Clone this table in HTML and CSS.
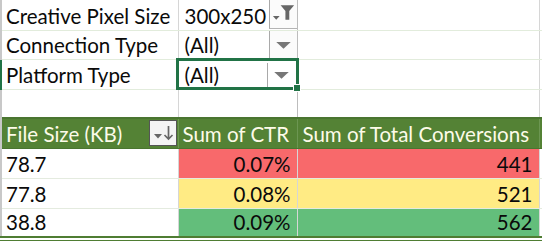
FILE: index.html
```html
<!DOCTYPE html>
<html lang="en">
<head>
    <meta charset="UTF-8">
    <title>Pivot Report</title>
    <link rel="stylesheet" href="styles.css">
</head>
<body>
    <table class="sheet">
        <colgroup>
            <col class="c1"><col class="c2"><col class="c3"><col class="c4">
        </colgroup>
        <!-- Report filters -->
        <tr class="filter r1">
            <td class="label">Creative Pixel Size</td>
            <td class="value">300x250
                <span class="drop">
                    <svg width="28" height="28" viewBox="0 0 28 28">
                        <path d="M3 16h7l-3.5 4z" fill="#666"/>
                        <path d="M11 5h14l-5 6v9h-4v-9z" fill="#666"/>
                    </svg>
                </span>
            </td>
            <td></td><td></td>
        </tr>
        <tr class="filter r2">
            <td class="label">Connection Type</td>
            <td class="value">(All)
                <span class="drop">
                    <svg width="28" height="28" viewBox="0 0 28 28"><path d="M6.5 11h15l-7.5 7z" fill="#777"/></svg>
                </span>
            </td>
            <td></td><td></td>
        </tr>
        <tr class="filter r3 active-row">
            <td class="label">Platform Type</td>
            <td class="value selected">(All)
                <span class="drop">
                    <svg width="28" height="26" viewBox="0 0 28 26"><path d="M6.5 10h15l-7.5 7z" fill="#777"/></svg>
                </span>
                <span class="sel-box"></span>
                <span class="fill-handle"></span>
            </td>
            <td></td><td></td>
        </tr>
        <tr class="filter r4">
            <td class="label"></td><td class="value"></td><td></td><td></td>
        </tr>

        <!-- Pivot header -->
        <tr class="head">
            <td class="label">File Size (KB)
                <span class="sort">
                    <svg width="26" height="24" viewBox="0 0 26 24">
                        <path d="M4 13h8l-4 4.5z" fill="#666"/>
                        <path d="M18.5 5v13M14.5 14l4 4 4-4" stroke="#666" stroke-width="1.7" fill="none"/>
                    </svg>
                </span>
            </td>
            <td class="num">Sum of CTR</td>
            <td class="conv">Sum of Total Conversions</td>
            <td class="spare"></td>
        </tr>

        <!-- Pivot rows -->
        <tr class="data">
            <td class="label">78.7</td>
            <td class="num red">0.07%</td>
            <td class="num red">441</td>
            <td></td>
        </tr>
        <tr class="data">
            <td class="label">77.8</td>
            <td class="num yellow">0.08%</td>
            <td class="num yellow">521</td>
            <td></td>
        </tr>
        <tr class="data last">
            <td class="label">38.8</td>
            <td class="num green">0.09%</td>
            <td class="num green">562</td>
            <td></td>
        </tr>
    </table>
    <div class="totals-rule"></div>
</body>
</html>
```

FILE: styles.css
```css
body {
    margin: 0;
    background: #fff;
    font-family: Lato, "Open Sans", sans-serif;
    font-size: 20.5px;
    color: #0a0a0a;
    width: 542px;
    height: 241px;
    overflow: hidden;
}
.sheet {
    border-collapse: collapse;
    table-layout: fixed;
    width: 542px;
}
.c1 { width: 177px; }
.c2 { width: 119px; }
.c3 { width: 242px; }
.c4 { width: 4px; }

.sheet td {
    padding: 0 6px 2px 6px;
    vertical-align: bottom;
    white-space: nowrap;
    overflow: visible;
    border-right: 1px solid #d6d6d6;
    border-bottom: 1px solid #e2ecdc;
    line-height: 24px;
}
.sheet td.label {
    border-left: 2px solid #c8c8c8;
    padding-left: 4px;
}

.r1 { height: 30px; }
.r2 { height: 29px; }
.r3 { height: 30px; }
.r4 { height: 29px; }
.head { height: 30px; }
.data { height: 30px; }
.data.last { height: 29px; }

.active-row td.label {
    border-left-color: #217346;
}

/* filter value cells with dropdown buttons */
.value {
    position: relative;
}
.filter td.value {
    border-right-color: #bdbdbd;
}
.drop {
    position: absolute;
    right: 0;
    top: 0;
    width: 27px;
    height: 28px;
    background: #fbfbfb;
    border-left: 1px solid #a9a9a9;
    border-bottom: 1px solid #b4b4b4;
    display: flex;
    align-items: center;
    justify-content: center;
}
.r3 .drop {
    top: 3px;
    height: 24px;
    right: 2px;
    border-bottom: none;
    background: #fff;
}
.sel-box {
    position: absolute;
    left: -3px;
    top: -2px;
    right: -2px;
    bottom: -1px;
    border: 3px solid #217346;
}
.fill-handle {
    position: absolute;
    right: -4px;
    bottom: -3px;
    width: 6px;
    height: 6px;
    background: #217346;
    border: 1px solid #fff;
}

/* pivot header */
.head td {
    background: #548235;
    color: #fdfbe9;
    border-top: 2px solid #4a7530;
    border-bottom: 1px solid #4a7530;
    border-right-color: #6c9652;
}
.head td.label {
    position: relative;
    border-left-color: #c8c8c8;
}
.sort {
    position: absolute;
    right: 1px;
    top: 1px;
    width: 26px;
    height: 24px;
    background: #f4f4f4;
    border: 1px solid #555;
}
.head .num {
    text-align: left;
    padding-left: 4px;
}
.head .conv {
    padding-left: 5px;
}

/* pivot values */
.num {
    text-align: right;
}
.data td {
    border-bottom: 1px solid #e4ebdf;
}
.data .red { background: #f8696b; }
.data .yellow { background: #ffeb84; }
.data .green { background: #63be7b; }
.data.last td {
    border-bottom: 2px solid #4f7d33;
}

.totals-rule {
    height: 2px;
    margin-top: 2px;
    background: #4f7d33;
}
```
